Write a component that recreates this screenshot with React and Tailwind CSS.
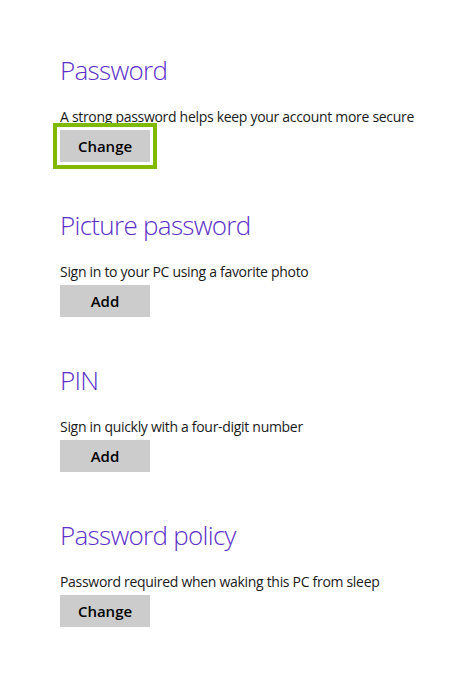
const sections = [
  { title: "Password", desc: "A strong password helps keep your account more secure", action: "Change", focused: true },
  { title: "Picture password", desc: "Sign in to your PC using a favorite photo", action: "Add" },
  { title: "PIN", desc: "Sign in quickly with a four-digit number", action: "Add" },
  { title: "Password policy", desc: "Password required when waking this PC from sleep", action: "Change" },
];

export default function App() {
  return (
    <div className="w-[476px] h-[688px] bg-white pl-[60px] pt-[50px]" style={{ fontFamily: '"Open Sans", "Noto Sans", sans-serif' }}>
      {sections.map((s) => (
        <div key={s.title} className="h-[155px]">
          <h2 className="text-[26px] font-light leading-[40px] text-[#5b2fc8] tracking-[-0.7px]">{s.title}</h2>
          <p className="mt-[17px] text-[14px] leading-[20px] text-[#1a1a1a] tracking-[-0.3px]">{s.desc}</p>
          <button
            className={`mt-[3px] w-[90px] h-[32px] bg-[#cccccc] text-[15px] font-semibold text-black ${
              s.focused ? "outline-[4px] outline-solid outline-[#7fba00] outline-offset-[3px]" : ""
            }`}
          >
            {s.action}
          </button>
        </div>
      ))}
    </div>
  );
}
